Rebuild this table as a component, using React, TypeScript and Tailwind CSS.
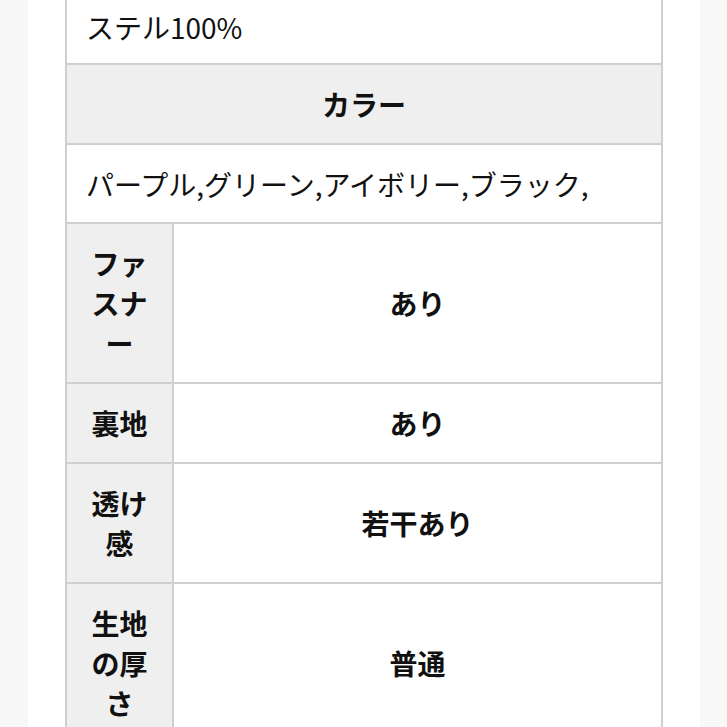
const FONT = { fontFamily: '"Noto Sans CJK JP", "Noto Sans", sans-serif' };

const SPEC_ROWS: { label: string[]; value: string }[] = [
  { label: ['ファ', 'スナ', 'ー'], value: 'あり' },
  { label: ['裏地'], value: 'あり' },
  { label: ['透け', '感'], value: '若干あり' },
  { label: ['生地', 'の厚', 'さ'], value: '普通' },
];

export default function App() {
  return (
    <div className="flex h-[727px] overflow-hidden bg-white text-[28px] leading-[40px] text-[#111]" style={FONT}>
      <div className="w-[28px] shrink-0 bg-[#f7f7f7]" />
      <div className="flex-1 px-[37px]">
        <div className="border-x-2 border-[#cfcfcf]">
          {/* material (cut at top) */}
          <div className="border-b-2 border-[#cfcfcf] px-[19px] pt-[7px] pb-[16px]">ステル100%</div>

          {/* colour header */}
          <div className="border-b-2 border-[#cfcfcf] bg-[#efefef] py-[19px] text-center font-bold">カラー</div>
          <div className="border-b-2 border-[#cfcfcf] px-[19px] pt-[19px] pb-[18px]">
            パープル,グリーン,アイボリー,ブラック,
          </div>

          {SPEC_ROWS.map((r) => (
            <div key={r.value + r.label.join('')} className="flex border-b-2 border-[#cfcfcf]">
              <div className="w-[107px] shrink-0 border-r-2 border-[#cfcfcf] bg-[#efefef] py-[19px] text-center font-bold">
                {r.label.map((l) => (
                  <div key={l}>{l}</div>
                ))}
              </div>
              <div className="flex flex-1 items-center justify-center font-bold">{r.value}</div>
            </div>
          ))}
        </div>
      </div>
      <div className="w-[27px] shrink-0 bg-[#f8f8f8]" />
    </div>
  );
}
